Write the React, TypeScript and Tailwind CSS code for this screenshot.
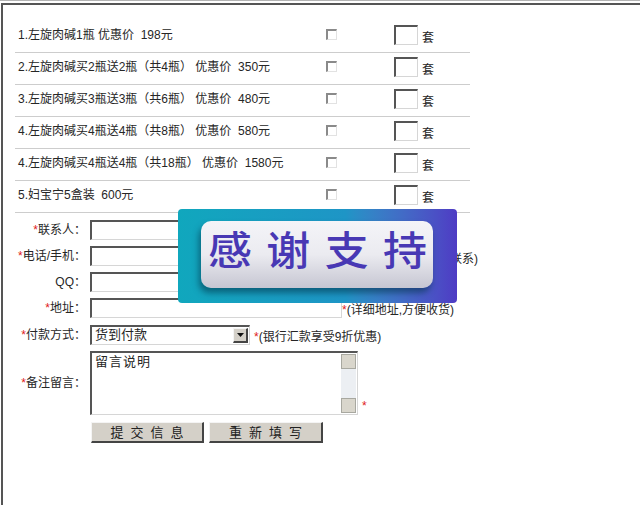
import type { ReactNode } from 'react'

const products = [
  '1.左旋肉碱1瓶 优惠价\u00a0\u00a0198元',
  '2.左旋肉碱买2瓶送2瓶（共4瓶） 优惠价\u00a0\u00a0350元',
  '3.左旋肉碱买3瓶送3瓶（共6瓶） 优惠价\u00a0\u00a0480元',
  '4.左旋肉碱买4瓶送4瓶（共8瓶） 优惠价\u00a0\u00a0580元',
  '4.左旋肉碱买4瓶送4瓶（共18瓶） 优惠价\u00a0\u00a01580元',
  '5.妇宝宁5盒装\u00a0\u00a0600元',
]

// classic sunken field border
const inset =
  'border-t-2 border-l-2 border-b border-r border-t-[#555] border-l-[#555] border-b-[#d6d6d6] border-r-[#d6d6d6] bg-white'
const outset =
  'border-t border-l border-b-2 border-r-2 border-t-[#f4f4f4] border-l-[#f4f4f4] border-b-[#444] border-r-[#444] bg-[#d4d0c8]'

function Star() {
  return <span className="text-[#e02020]">*</span>
}

function Label({ req, children }: { req?: boolean; children: ReactNode }) {
  return (
    <span className="w-[71px] shrink-0 text-right whitespace-nowrap">
      {req && <Star />}
      {children}
    </span>
  )
}

function FieldRow({ label, req, children }: { label: string; req?: boolean; children?: ReactNode }) {
  return (
    <div className="flex h-[26px] items-center">
      <Label req={req}>{label}</Label>
      {children}
    </div>
  )
}

export default function App() {
  return (
    <div className="relative h-[505px] overflow-hidden bg-white font-['Liberation_Sans','Noto_Sans_CJK_SC',sans-serif] text-[12px] text-[#262626]">
      <div className="h-[3px] border-t border-[#b4b4b4]" />
      <div className="ml-px h-[502px] border-l-2 border-t-2 border-[#555]">
        {/* product list */}
        <div className="ml-[12px] mt-[16px] w-[455px]">
          {products.map((p) => (
            <div
              key={p}
              className="grid h-[32px] grid-cols-[311px_68px_1fr] items-center border-b border-[#cdcdcd] pb-[4px]"
            >
              <span className="pl-[3px] whitespace-pre">{p}</span>
              <span className="block h-[11px] w-[11px] border-t-2 border-l-2 border-r border-b border-t-[#8a8a8a] border-l-[#8a8a8a] border-r-[#e2e2e2] border-b-[#e2e2e2] bg-white" />
              <div className="flex items-end">
                <span className={`block h-[20px] w-[24px] ${inset}`} />
                <span className="mb-[1px] ml-[4px] leading-[12px]">套</span>
              </div>
            </div>
          ))}
        </div>

        {/* order form */}
        <div className="ml-[12px] mt-[4px]">
          <FieldRow label="联系人：" req>
            <span className={`ml-[4px] block h-[20px] w-[252px] ${inset}`} />
          </FieldRow>
          <FieldRow label="电话/手机：" req>
            <span className={`ml-[4px] block h-[20px] w-[252px] ${inset}`} />
            <span className="mt-[6px] whitespace-nowrap">
              <Star />
              (务必真实,方便与您联系)
            </span>
          </FieldRow>
          <FieldRow label="QQ：">
            <span className={`ml-[4px] block h-[20px] w-[252px] ${inset}`} />
          </FieldRow>
          <FieldRow label="地址：" req>
            <span className={`ml-[4px] block h-[20px] w-[252px] ${inset}`} />
            <span className="mt-[4px] whitespace-nowrap">
              <Star />
              (详细地址,方便收货)
            </span>
          </FieldRow>
          <div className="mt-[1px]">
            <FieldRow label="付款方式：" req>
              <div className={`ml-[4px] flex h-[20px] w-[160px] ${inset}`}>
                <span className="flex-1 pl-[3px] text-[13px] leading-[16px]">货到付款</span>
                <span className={`m-px flex w-[15px] items-center justify-center ${outset}`}>
                  <svg width="7" height="4" viewBox="0 0 7 4">
                    <path d="M0 0h7L3.5 4z" fill="#111" />
                  </svg>
                </span>
              </div>
              <span className="ml-[4px] mt-[4px] whitespace-nowrap">
                <Star />
                (银行汇款享受9折优惠)
              </span>
            </FieldRow>
          </div>
          <div className="mt-[3px] flex items-center">
            <Label req>备注留言：</Label>
            <div className={`ml-[4px] flex h-[64px] w-[268px] ${inset}`}>
              <span className="flex-1 pl-[3px] pt-[1px] text-[13px] leading-[16px] tracking-[1px]">留言说明</span>
              <div className="my-px mr-px flex w-[15px] flex-col bg-[#eceff3]">
                <span className="block h-[15px] border border-[#a8a8a0] bg-[#d9d6cc]" />
                <span className="flex-1" />
                <span className="block h-[15px] border border-[#a8a8a0] bg-[#d9d6cc]" />
              </div>
            </div>
            <span className="ml-[4px] self-end text-[#e02020]">*</span>
          </div>
          <div className="ml-[76px] mt-[7px] flex gap-[5px]">
            <button className={`h-[21px] w-[113px] pl-[7px] text-[13px] tracking-[7px] text-[#222] ${outset}`}>提交信息</button>
            <button className={`h-[21px] w-[114px] pl-[7px] text-[13px] tracking-[7px] text-[#222] ${outset}`}>重新填写</button>
          </div>
        </div>
      </div>

      {/* thank-you banner over the form */}
      <div className="absolute left-[178px] top-[209px] h-[94px] w-[279px] rounded-[4px] bg-linear-to-r from-[#10a7bd] via-[#1e95c6] via-60% to-[#4e3bc4] pl-[23px] pt-[12px]">
        <div className="flex h-[67px] w-[232px] items-center justify-center rounded-[10px] bg-linear-to-b from-[#f4f4f8] via-[#ebebf0] to-[#c6c6d2] pb-[8px] shadow-[-2px_5px_6px_rgba(0,50,70,0.55)]">
          <span className="scale-x-[1.1] pl-[13px] text-[40px] leading-none font-medium tracking-[13px] text-[#4838b4]">
            感谢支持
          </span>
        </div>
      </div>
    </div>
  )
}
